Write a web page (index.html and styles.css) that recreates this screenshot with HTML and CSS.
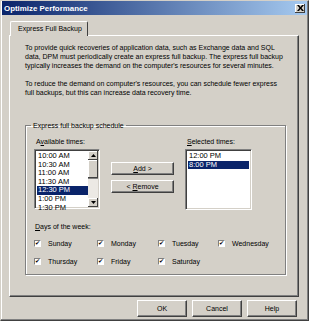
FILE: index.html
```html
<!DOCTYPE html>
<html>

<head>
  <title>Optimize Performance</title>
  <link rel="stylesheet" href="styles.css">
</head>

<body>
  <div class="dialog">
    <div class="titlebar">
      <span class="title">Optimize Performance</span>
      <span class="close">
        <svg width="7" height="6" viewBox="0 0 7 6"><path d="M0 0h2l1.5 2 1.5-2h2l-2.5 3 2.5 3h-2l-1.5-2-1.5 2h-2l2.5-3z" fill="#000"/></svg>
      </span>
    </div>

    <div class="tabs">
      <div class="tab">Express Full Backup</div>
    </div>

    <div class="panel">
      <p>To provide quick recoveries of application data, such as Exchange data and SQL data, DPM must periodically create an express full backup. The express full backup typically increases the demand on the computer's resources for several minutes.</p>
      <p>To reduce the demand on computer's resources, you can schedule fewer express full backups, but this can increase data recovery time.</p>

      <fieldset class="group">
        <legend>Express full backup schedule</legend>
        <div class="lists">
          <div class="col">
            <label>A<u>v</u>ailable times:</label>
            <div class="listbox">
              <ul>
                <li>10:00 AM</li>
                <li>10:30 AM</li>
                <li>11:00 AM</li>
                <li>11:30 AM</li>
                <li class="sel">12:30 PM</li>
                <li>1:00 PM</li>
                <li>1:30 PM</li>
              </ul>
              <div class="scroll">
                <span class="arrow">
                  <svg width="5" height="3" viewBox="0 0 5 3"><path d="M2.5 0L5 3H0z" fill="#000"/></svg>
                </span>
                <span class="thumb"></span>
                <span class="track"></span>
                <span class="arrow">
                  <svg width="5" height="3" viewBox="0 0 5 3"><path d="M0 0h5L2.5 3z" fill="#000"/></svg>
                </span>
              </div>
            </div>
          </div>
          <div class="actions">
            <button class="btn"><u>A</u>dd &gt;</button>
            <button class="btn">&lt; <u>R</u>emove</button>
          </div>
          <div class="col">
            <label><u>S</u>elected times:</label>
            <div class="listbox wide">
              <ul>
                <li>12:00 PM</li>
                <li class="sel">8:00 PM</li>
              </ul>
            </div>
          </div>
        </div>

        <div class="days-label"><u>D</u>ays of the week:</div>
        <div class="days">
          <span class="check"><i>&#10004;</i>Sunday</span>
          <span class="check"><i>&#10004;</i>Monday</span>
          <span class="check"><i>&#10004;</i>Tuesday</span>
          <span class="check"><i>&#10004;</i>Wednesday</span>
          <span class="check"><i>&#10004;</i>Thursday</span>
          <span class="check"><i>&#10004;</i>Friday</span>
          <span class="check"><i>&#10004;</i>Saturday</span>
        </div>
      </fieldset>
    </div>

    <div class="footer">
      <button class="btn">OK</button>
      <button class="btn">Cancel</button>
      <button class="btn">Help</button>
    </div>
  </div>
</body>

</html>
```

FILE: styles.css
```css
body {
  margin: 0;
  font-family: "Liberation Sans", Arial, sans-serif;
  font-size: 7px;
  color: #000;
}

.dialog {
  width: 309px;
  height: 321px;
  box-sizing: border-box;
  background-color: #d4d0c8;
  border-top: 1px solid #d4d0c8;
  border-left: 1px solid #d4d0c8;
  border-right: 1px solid #404040;
  border-bottom: 1px solid #404040;
  box-shadow: inset -1px -1px 0 #808080, inset 1px 1px 0 #fff;
  padding: 0 1px;
}

.titlebar {
  height: 14px;
  display: flex;
  align-items: center;
  justify-content: space-between;
  background: linear-gradient(to right, #0a246a, #a6caf0);
  padding: 0 2px 0 2px;
}

.title {
  color: #fff;
  font-weight: bold;
  font-size: 7.9px;
}

.close {
  width: 10px;
  height: 9px;
  display: flex;
  align-items: center;
  justify-content: center;
  background-color: #d4d0c8;
  box-shadow: inset -1px -1px 0 #404040, inset 1px 1px 0 #fff;
}

.tabs {
  display: flex;
  padding: 5px 0 0 8px;
}

.tab {
  padding: 3px 5px 3px 7px;
  background-color: #d4d0c8;
  border-top: 1px solid #fff;
  border-left: 1px solid #fff;
  border-right: 1px solid #404040;
  border-radius: 2px 2px 0 0;
  position: relative;
  top: 1px;
  line-height: 8px;
}

.panel {
  margin: 0 8px 0 7px;
  height: 262px;
  box-sizing: border-box;
  border-top: 1px solid #fff;
  border-left: 1px solid #fff;
  border-right: 1px solid #404040;
  border-bottom: 1px solid #404040;
  box-shadow: inset -1px -1px 0 #808080;
  padding: 8px 10px 0 15px;
}

.panel p {
  margin: 0 0 10px 0;
  line-height: 8.8px;
  width: 261px;
}

.group {
  margin: 24px 2px 0 0;
  padding: 9px 8px 0 8px;
  height: 153px;
  box-sizing: border-box;
  border: 1px solid #808080;
  box-shadow: 1px 1px 0 #fff, inset 1px 1px 0 #fff;
}

.group legend {
  padding: 0 2px;
  margin-left: -3px;
}

.lists {
  display: flex;
  align-items: flex-start;
}

.col {
  flex: none;
}

.col label {
  display: block;
  margin: 0 0 4px 2px;
}

.listbox {
  display: flex;
  width: 66px;
  height: 60px;
  box-sizing: border-box;
  background-color: #fff;
  border-top: 1px solid #808080;
  border-left: 1px solid #808080;
  border-right: 1px solid #fff;
  border-bottom: 1px solid #fff;
  box-shadow: inset 1px 1px 0 #404040, inset -1px -1px 0 #d4d0c8;
  padding: 2px;
}

.listbox.wide {
  width: 67px;
  height: 61px;
}

.listbox ul {
  flex: 1;
  min-width: 0;
  margin: 0;
  padding: 0;
  list-style: none;
  font-size: 7.5px;
}

.listbox li {
  line-height: 8.6px;
  padding-left: 1px;
  white-space: nowrap;
}

.listbox li.sel {
  background-color: #0a246a;
  color: #fff;
}

.scroll {
  flex: none;
  width: 10px;
  display: flex;
  flex-direction: column;
  margin: -1px -1px -1px 0;
}

.arrow,
.thumb {
  flex: none;
  height: 9px;
  background-color: #d4d0c8;
  box-shadow: inset -1px -1px 0 #404040, inset 1px 1px 0 #fff;
  display: flex;
  align-items: center;
  justify-content: center;
}

.thumb {
  height: 18px;
  border-bottom: 1px solid #808080;
}

.track {
  flex: 1;
  background-color: #ece9e4;
}

.actions {
  flex: none;
  display: flex;
  flex-direction: column;
  gap: 5px;
  margin: 24px 11px 0 11px;
}

.btn {
  width: 63px;
  height: 13px;
  padding: 0;
  font-family: inherit;
  font-size: 7px;
  color: #000;
  background-color: #d4d0c8;
  border-top: 1px solid #fff;
  border-left: 1px solid #fff;
  border-right: 1px solid #404040;
  border-bottom: 1px solid #404040;
  box-shadow: inset -1px -1px 0 #808080;
}

.days-label {
  margin: 13px 0 0 1px;
}

.days {
  display: grid;
  grid-template-columns: 63px 61px 60px auto;
  row-gap: 10px;
  margin-top: 10px;
}

.check {
  display: flex;
  align-items: center;
  gap: 7px;
  line-height: 8px;
}

.check i {
  width: 7px;
  height: 7px;
  box-sizing: border-box;
  background-color: #fff;
  border-top: 1px solid #808080;
  border-left: 1px solid #808080;
  border-right: 1px solid #fff;
  border-bottom: 1px solid #fff;
  font-style: normal;
  font-size: 6px;
  line-height: 5px;
  text-align: center;
}

.footer {
  display: flex;
  justify-content: flex-end;
  gap: 5px;
  padding: 3px 10px 0 0;
}

.footer .btn {
  width: 50px;
  height: 17px;
}
```
